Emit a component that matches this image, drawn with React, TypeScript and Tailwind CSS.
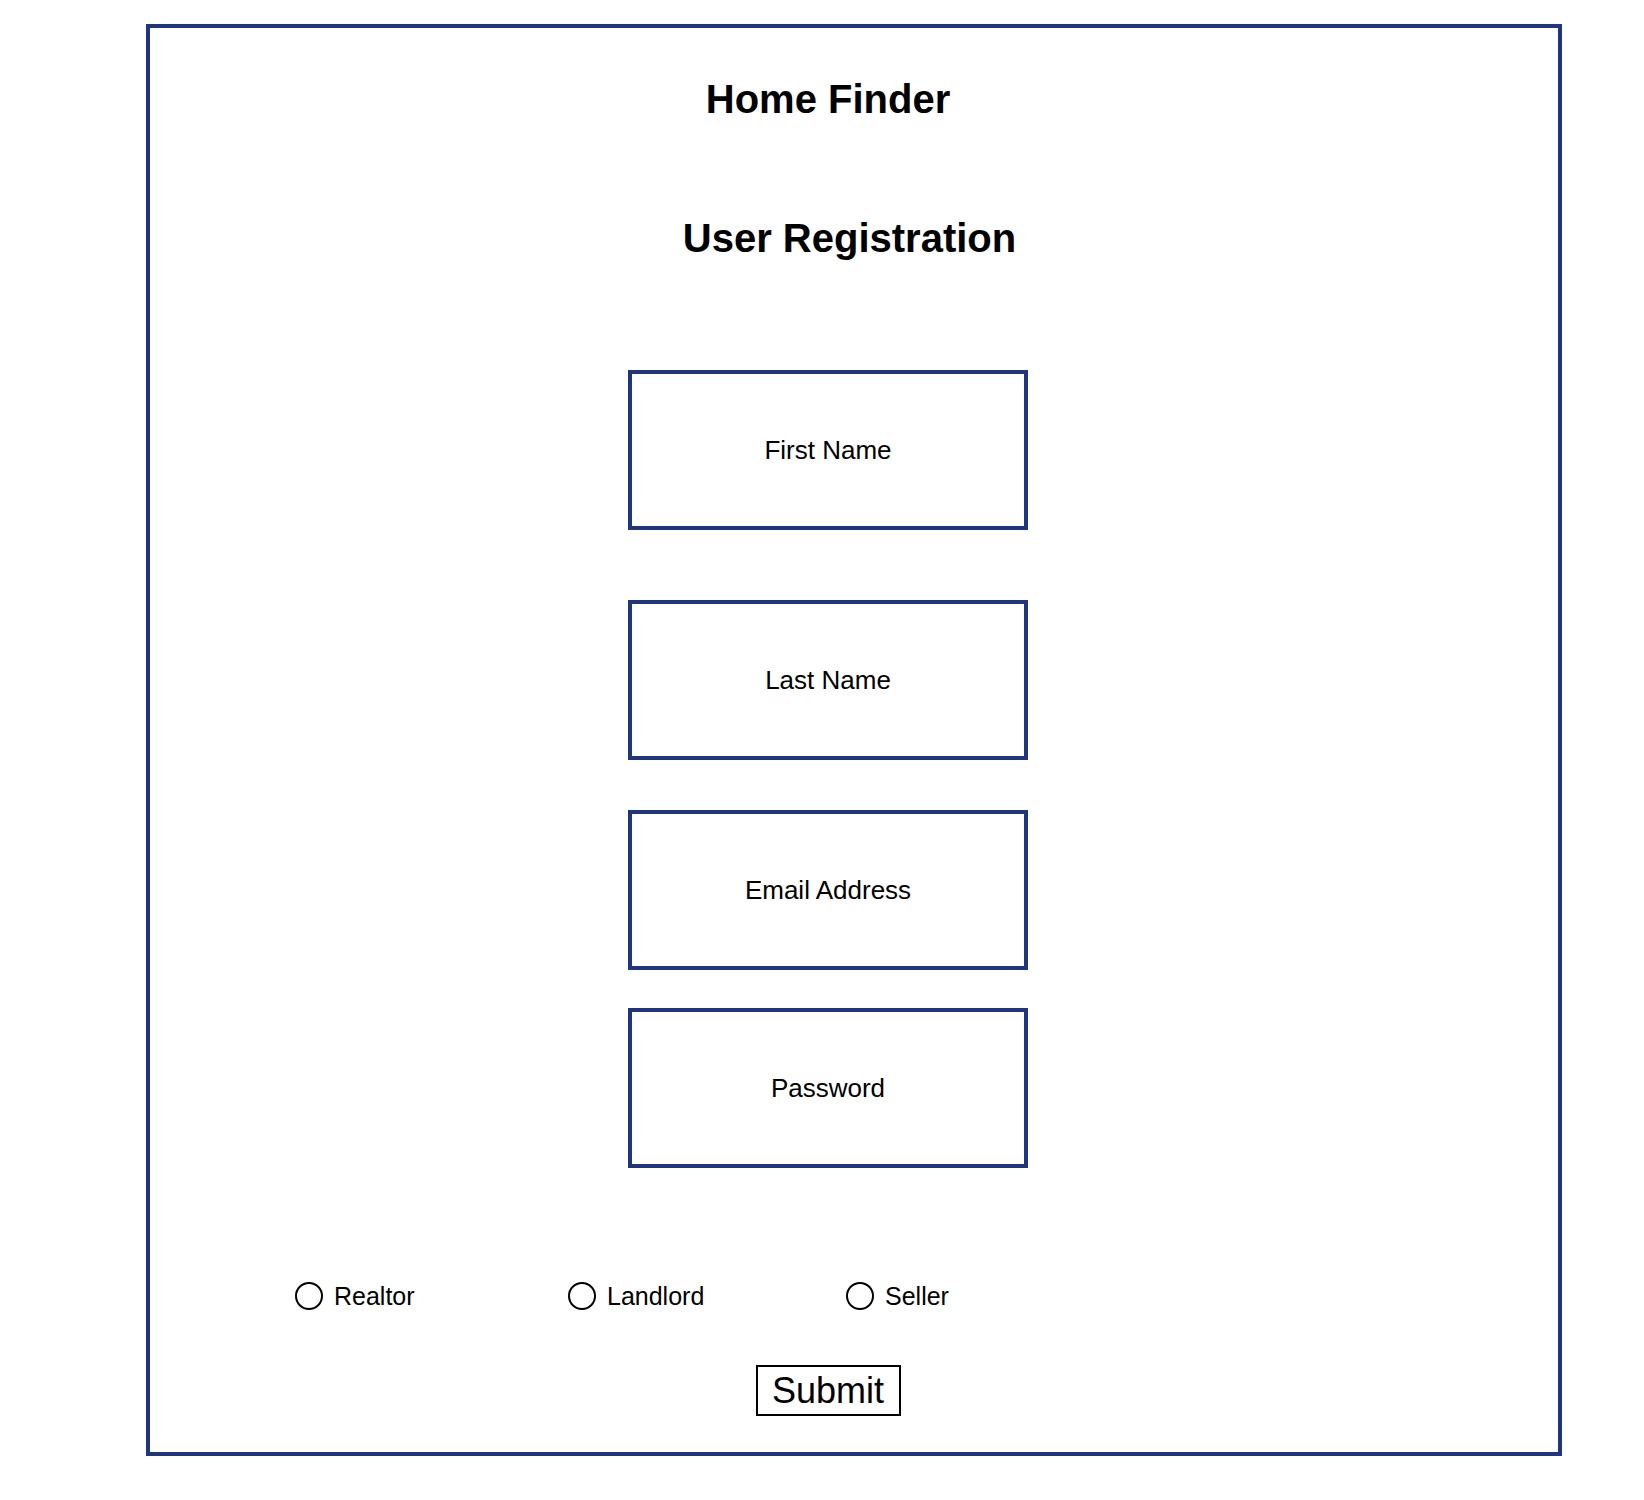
const FIELDS = ["First Name", "Last Name", "Email Address", "Password"];

// spacing above each field box, taken from the mockup
const FIELD_GAPS = ["mt-[112px]", "mt-[70px]", "mt-[50px]", "mt-[38px]"];

const ROLES = [
  { label: "Realtor", width: "w-[273px]" },
  { label: "Landlord", width: "w-[278px]" },
  { label: "Seller", width: "w-[200px]" },
];

const sketchFont = { fontFamily: '"Comic Sans MS", "Liberation Sans", sans-serif' };

export default function App() {
  return (
    <div className="min-h-[1500px] bg-white pt-[24px] pl-[146px] font-['Liberation_Sans',Arial,sans-serif] text-black">
      <div className="w-[1416px] h-[1432px] border-4 border-[#1f3581]">
        <div className="w-[1356px] flex flex-col items-center">
          {/* Titles */}
          <h1 className="mt-[51px] text-[40px] leading-none font-bold">Home Finder</h1>
          <h2 className="mt-[99px] pl-[43px] text-[40px] leading-none font-bold">User Registration</h2>

          {/* Form fields */}
          {FIELDS.map((f, i) => (
            <div
              key={f}
              className={`${FIELD_GAPS[i]} w-[400px] h-[160px] border-4 border-[#1f3581] flex items-center justify-center text-[26px]`}
            >
              {f}
            </div>
          ))}

          {/* Role radios */}
          <div className="mt-[113px] self-stretch pl-[145px] flex items-center h-[30px]">
            {ROLES.map((r) => (
              <label key={r.label} className={`${r.width} flex items-center gap-[11px]`}>
                <span className="w-[28px] h-[28px] rounded-full border-2 border-black shrink-0" />
                <span className="text-[25px] leading-none" style={sketchFont}>
                  {r.label}
                </span>
              </label>
            ))}
          </div>

          {/* Submit */}
          <button
            className="mt-[54px] w-[145px] h-[51px] border-2 border-black bg-white flex items-center justify-center text-[36px] leading-none"
            style={sketchFont}
          >
            Submit
          </button>
        </div>
      </div>
    </div>
  );
}
